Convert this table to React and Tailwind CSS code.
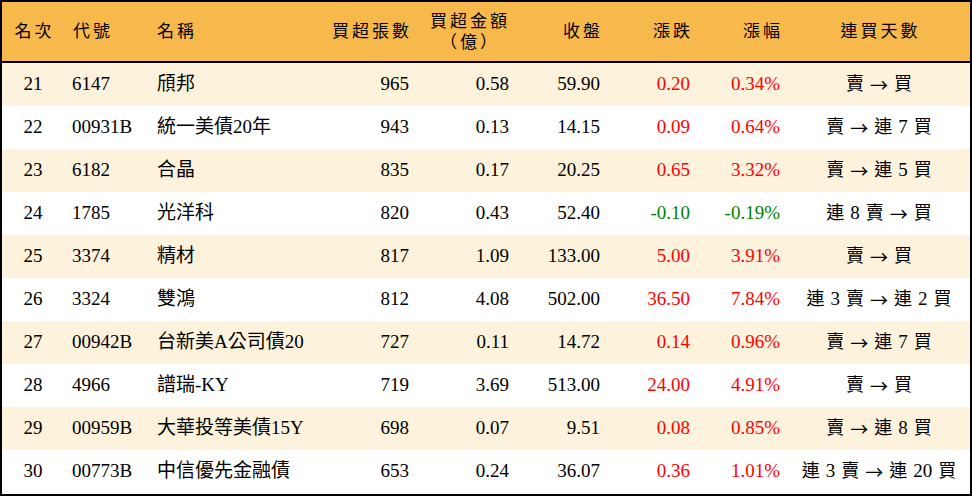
import React from 'react';

const rows = [
    { rank: 21, code: '6147', name: '頎邦', vol: '965', amt: '0.58', close: '59.90', chg: '0.20', pct: '0.34%', days: '賣 → 買' },
    { rank: 22, code: '00931B', name: '統一美債20年', vol: '943', amt: '0.13', close: '14.15', chg: '0.09', pct: '0.64%', days: '賣 → 連 7 買' },
    { rank: 23, code: '6182', name: '合晶', vol: '835', amt: '0.17', close: '20.25', chg: '0.65', pct: '3.32%', days: '賣 → 連 5 買' },
    { rank: 24, code: '1785', name: '光洋科', vol: '820', amt: '0.43', close: '52.40', chg: '-0.10', pct: '-0.19%', days: '連 8 賣 → 買' },
    { rank: 25, code: '3374', name: '精材', vol: '817', amt: '1.09', close: '133.00', chg: '5.00', pct: '3.91%', days: '賣 → 買' },
    { rank: 26, code: '3324', name: '雙鴻', vol: '812', amt: '4.08', close: '502.00', chg: '36.50', pct: '7.84%', days: '連 3 賣 → 連 2 買' },
    { rank: 27, code: '00942B', name: '台新美A公司債20', vol: '727', amt: '0.11', close: '14.72', chg: '0.14', pct: '0.96%', days: '賣 → 連 7 買' },
    { rank: 28, code: '4966', name: '譜瑞-KY', vol: '719', amt: '3.69', close: '513.00', chg: '24.00', pct: '4.91%', days: '賣 → 買' },
    { rank: 29, code: '00959B', name: '大華投等美債15Y', vol: '698', amt: '0.07', close: '9.51', chg: '0.08', pct: '0.85%', days: '賣 → 連 8 買' },
    { rank: 30, code: '00773B', name: '中信優先金融債', vol: '653', amt: '0.24', close: '36.07', chg: '0.36', pct: '1.01%', days: '連 3 賣 → 連 20 買' },
];

const cols = 'grid grid-cols-[62px_85px_171px_97px_100px_91px_90px_90px_182px]';

// 連買天數: tokens spaced apart, arrow drawn long like the reference
function Days({ text }) {
    return (
        <div className="flex items-center justify-center gap-[6px] text-[18px]">
            {text.split(' ').map((t, i) =>
                t === '→' ? (
                    <span key={i} className="text-[18px]" style={{ fontFamily: '"Noto Sans CJK TC", sans-serif' }}>→</span>
                ) : (
                    <span key={i} className={/\d/.test(t) ? 'text-[19px]' : ''}>{t}</span>
                )
            )}
        </div>
    );
}

export default function App() {
    return (
        <div
            className="w-[972px] h-[496px] bg-white border-2 border-black text-black overflow-hidden"
            style={{ fontFamily: '"Liberation Serif", "Noto Sans CJK TC", serif' }}
        >
            {/* Header */}
            <div className={`${cols} h-[61px] items-center bg-[#f8b94c] border-b-2 border-black text-[17px] tracking-[3px] leading-[21px]`}>
                <div className="text-center pl-[3px]">名次</div>
                <div className="pl-[9px]">代號</div>
                <div className="pl-2">名稱</div>
                <div className="text-right pr-[5px]">買超張數</div>
                <div className="text-center pl-[6px]">
                    <div>買超金額</div>
                    <div>（億）</div>
                </div>
                <div className="text-right pr-[5px]">收盤</div>
                <div className="text-right pr-[5px]">漲跌</div>
                <div className="text-right pr-[5px]">漲幅</div>
                <div className="text-center pl-[3px]">連買天數</div>
            </div>

            {/* Rows */}
            {rows.map((r, i) => {
                const color = r.chg.startsWith('-') ? 'text-[#008000]' : 'text-[#ff0000]';
                return (
                    <div
                        key={r.rank}
                        className={`${cols} h-[43px] items-center text-[19px] ${i % 2 === 0 ? 'bg-[#fdf2dc]' : 'bg-white'}`}
                    >
                        <div className="text-center">{r.rank}</div>
                        <div className="pl-2">{r.code}</div>
                        <div className="pl-2 whitespace-nowrap">{r.name}</div>
                        <div className="text-right pr-2">{r.vol}</div>
                        <div className="text-right pr-2">{r.amt}</div>
                        <div className="text-right pr-2">{r.close}</div>
                        <div className={`text-right pr-2 ${color}`}>{r.chg}</div>
                        <div className={`text-right pr-2 ${color}`}>{r.pct}</div>
                        <Days text={r.days} />
                    </div>
                );
            })}
        </div>
    );
}
